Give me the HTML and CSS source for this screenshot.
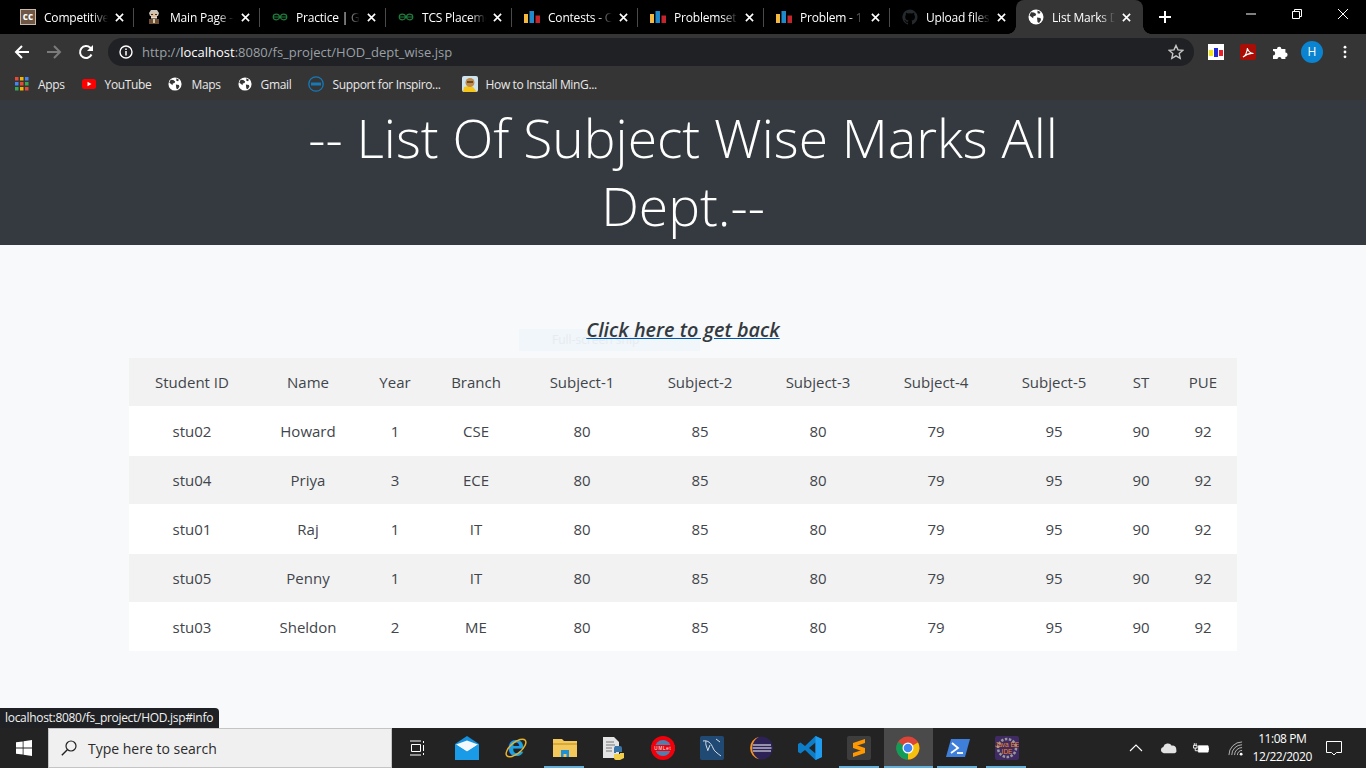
FILE: index.html
```html
<!doctype html>
<html lang="en">

<head>
    <title>List Marks Dept</title>
    <link rel="stylesheet" href="styles.css">
</head>

<body>
    <!-- shared icons -->
    <svg class="defs" aria-hidden="true">
        <symbol id="globe" viewBox="0 0 16 16">
            <circle cx="8" cy="8" r="7.5" fill="#fff" />
            <path d="M3 3.2l3 .3 2.200 1.500-.7 1.800-2 .5-.4 2-1.600-1.300L1.500 6.500zM9 8.500l3.500.5.500 2-2 3-1.500-1zM9.500 1.500l3 1.500-1 1.800-2-.6z" fill="#353535" />
        </symbol>
        <symbol id="bars" viewBox="0 0 16 16">
            <rect x="0" y="5" width="4" height="9" fill="#f4b83f" />
            <rect x="5.500" y="2" width="4.500" height="12" fill="#1f8acb" />
            <rect x="11.500" y="6.500" width="4.500" height="7.500" fill="#c4242b" />
        </symbol>
        <symbol id="gfg" viewBox="0 1 20 10">
            <path d="M1 6h18M9.500 6C9 3.500 7.500 2.500 5.500 2.500 3 2.500 1.500 4 1.500 6s1.500 3.500 4 3.500c2 0 3.500-1 4-3.500M10.500 6c.5-2.500 2-3.500 4-3.500 2.500 0 4 1.500 4 3.500s-1.500 3.500-4 3.500c-2 0-3.500-1-4-3.500" fill="none" stroke="#1f7a3a" stroke-width="1.500" />
        </symbol>
        <symbol id="close" viewBox="0 0 10 10">
            <path d="M1 1l8 8M9 1L1 9" stroke="#fff" stroke-width="1.800" fill="none" />
        </symbol>
    </svg>

    <div class="tabstrip">
        <div class="tab">
            <span class="favicon cc">cc</span>
            <span class="tab-title">Competitive Programming</span>
            <svg class="tab-close"><use href="#close" /></svg>
        </div>
        <div class="tab">
            <svg class="favicon" viewBox="0 0 16 16">
                <path d="M3 4l2-3h6l2 3-1 3H4z" fill="#c9c4bc" />
                <rect x="5" y="4" width="6" height="5" fill="#e3b98f" />
                <rect x="5" y="5" width="2" height="1" fill="#333" />
                <rect x="9" y="5" width="2" height="1" fill="#333" />
                <rect x="5" y="8" width="6" height="1.500" fill="#ddd" />
                <path d="M3 10h10v5H3z" fill="#6d4f33" />
                <rect x="7" y="10" width="2" height="4" fill="#d9c8a8" />
            </svg>
            <span class="tab-title">Main Page - Wikipedia</span>
            <svg class="tab-close"><use href="#close" /></svg>
        </div>
        <div class="tab">
            <svg class="favicon gfg-icon"><use href="#gfg" /></svg>
            <span class="tab-title">Practice | GeeksforGeeks</span>
            <svg class="tab-close"><use href="#close" /></svg>
        </div>
        <div class="tab">
            <svg class="favicon gfg-icon"><use href="#gfg" /></svg>
            <span class="tab-title">TCS Placement Paper</span>
            <svg class="tab-close"><use href="#close" /></svg>
        </div>
        <div class="tab">
            <svg class="favicon"><use href="#bars" /></svg>
            <span class="tab-title">Contests - Codeforces</span>
            <svg class="tab-close"><use href="#close" /></svg>
        </div>
        <div class="tab">
            <svg class="favicon"><use href="#bars" /></svg>
            <span class="tab-title">Problemset - Codeforces</span>
            <svg class="tab-close"><use href="#close" /></svg>
        </div>
        <div class="tab">
            <svg class="favicon"><use href="#bars" /></svg>
            <span class="tab-title">Problem - 1 - Codeforces</span>
            <svg class="tab-close"><use href="#close" /></svg>
        </div>
        <div class="tab tab-no-sep">
            <svg class="favicon" viewBox="0 0 16 16">
                <path d="M8 .5a7.700 7.700 0 0 0-2.400 15c.4.100.5-.2.500-.4v-1.300c-2.100.4-2.600-1-2.600-1-.4-.9-.9-1.200-.9-1.200-.7-.5.100-.5.100-.5.800.100 1.200.8 1.200.8.700 1.200 1.800.9 2.300.7 0-.5.300-.9.500-1.100-1.700-.2-3.500-.9-3.500-3.800 0-.8.300-1.500.8-2-.1-.2-.3-1 .1-2 0 0 .6-.2 2.100.8a7 7 0 0 1 3.800 0c1.500-1 2.100-.8 2.100-.8.400 1 .2 1.800.1 2 .5.500.8 1.200.8 2 0 2.900-1.800 3.600-3.500 3.800.3.200.5.700.5 1.400v2.100c0 .2.100.5.500.4A7.700 7.700 0 0 0 8 .5z" fill="#24292e" />
            </svg>
            <span class="tab-title">Upload files to GitHub</span>
            <svg class="tab-close"><use href="#close" /></svg>
        </div>
        <div class="tab tab-active">
            <svg class="favicon"><use href="#globe" /></svg>
            <span class="tab-title">List Marks Dept Wise</span>
            <svg class="tab-close"><use href="#close" /></svg>
        </div>
        <svg class="new-tab" viewBox="0 0 12 12"><path d="M6 0v12M0 6h12" stroke="#fff" stroke-width="2" /></svg>
        <div class="window-controls">
            <svg viewBox="0 0 10 10"><path d="M0 5h10" stroke="#fff" /></svg>
            <svg viewBox="0 0 10 10"><path d="M.5 2.500h7v7h-7zM2.500 2.500v-2h7v7h-2" stroke="#fff" fill="none" /></svg>
            <svg viewBox="0 0 10 10"><path d="M0 0l10 10M10 0L0 10" stroke="#fff" fill="none" /></svg>
        </div>
    </div>

    <div class="toolbar">
        <svg class="nav-icon" viewBox="0 0 16 16"><path d="M15 8H2M8 2L2 8l6 6" stroke="#fff" stroke-width="2" fill="none" /></svg>
        <svg class="nav-icon" viewBox="0 0 16 16"><path d="M1 8h13M8 2l6 6-6 6" stroke="#7b7b7b" stroke-width="2" fill="none" /></svg>
        <svg class="nav-icon" viewBox="0 0 16 16"><path d="M13.500 10.500A6 6 0 1 1 12.300 3.800L14 5.500" stroke="#fff" stroke-width="2" fill="none" /><path d="M15 1v6H9z" fill="#fff" /></svg>
        <div class="omnibox">
            <svg class="info-icon" viewBox="0 0 14 14">
                <circle cx="7" cy="7" r="6" stroke="#fff" stroke-width="1.400" fill="none" />
                <path d="M7 6v4.500M7 3.500v1.500" stroke="#fff" stroke-width="1.500" />
            </svg>
            <span class="url">http://<b>localhost</b>:8080/fs_project/HOD_dept_wise.jsp</span>
            <svg class="star-icon" viewBox="0 0 16 16"><path d="M8 1.500l2 4.400 4.800.5-3.600 3.200 1 4.700L8 11.900l-4.200 2.400 1-4.700L1.200 6.400 6 5.900z" stroke="#c8c8c8" stroke-width="1.400" fill="none" /></svg>
        </div>
        <div class="extensions">
            <svg class="ext-icon" viewBox="0 0 16 16">
                <rect width="16" height="16" fill="#fff" />
                <rect x="1" y="6" width="4" height="6" fill="#f5e60a" />
                <rect x="6" y="4" width="4" height="9" fill="#1f2bd6" />
                <rect x="11" y="6" width="4" height="6" fill="#e8202a" />
            </svg>
            <svg class="ext-icon" viewBox="0 0 16 16">
                <rect width="16" height="16" rx="2" fill="#a80e06" />
                <path d="M3 13c2-1 4-5 4.500-9 .5 3 2 5 6 5.500-3-.5-7 .5-10.500 3.500z" stroke="#fff" stroke-width="1.200" fill="none" />
            </svg>
            <svg class="ext-icon" viewBox="0 0 16 16"><path d="M1 5h4a2.200 2.200 0 0 1 4.400 0h4v3.500a2.200 2.200 0 0 1 0 4.400V15H9.500a2 2 0 0 0-4 0H1v-3.500a2.200 2.200 0 0 0 0-4.400z" fill="#fff" /></svg>
            <span class="avatar">H</span>
            <svg class="menu-icon" viewBox="0 0 4 16"><circle cx="2" cy="2.500" r="1.600" fill="#fff" /><circle cx="2" cy="8" r="1.600" fill="#fff" /><circle cx="2" cy="13.500" r="1.600" fill="#fff" /></svg>
        </div>
    </div>

    <div class="bookmarks">
        <div class="bookmark">
            <svg class="bm-icon" viewBox="0 0 14 14">
                <rect x="0" y="0" width="3.500" height="3.500" fill="#e5493a" /><rect x="5" y="0" width="3.500" height="3.500" fill="#f4b400" /><rect x="10" y="0" width="3.500" height="3.500" fill="#4285f4" />
                <rect x="0" y="5" width="3.500" height="3.500" fill="#4285f4" /><rect x="5" y="5" width="3.500" height="3.500" fill="#e5493a" /><rect x="10" y="5" width="3.500" height="3.500" fill="#34a853" />
                <rect x="0" y="10" width="3.500" height="3.500" fill="#34a853" /><rect x="5" y="10" width="3.500" height="3.500" fill="#f4b400" /><rect x="10" y="10" width="3.500" height="3.500" fill="#e5493a" />
            </svg>
            <span>Apps</span>
        </div>
        <div class="bookmark">
            <svg class="bm-icon" viewBox="0 0 14 14"><rect y="2" width="14" height="10" rx="2.500" fill="#f00" /><path d="M5.500 4.800L9.500 7l-4 2.200z" fill="#fff" /></svg>
            <span>YouTube</span>
        </div>
        <div class="bookmark">
            <svg class="bm-icon"><use href="#globe" /></svg>
            <span>Maps</span>
        </div>
        <div class="bookmark">
            <svg class="bm-icon"><use href="#globe" /></svg>
            <span>Gmail</span>
        </div>
        <div class="bookmark">
            <svg class="bm-icon wide-icon" viewBox="0 0 16 16">
                <circle cx="8" cy="8" r="7.200" stroke="#1679b8" stroke-width="1.300" fill="none" />
                <rect x="3" y="6.500" width="10" height="3" fill="#1679b8" />
            </svg>
            <span>Support for Inspiro...</span>
        </div>
        <div class="bookmark bm-last">
            <svg class="bm-icon wide-icon" viewBox="0 0 16 16">
                <rect width="16" height="16" rx="2" fill="#cfe3ee" />
                <path d="M1 16l1-5 5-1 4 1 4 5z" fill="#f5c518" />
                <circle cx="8" cy="6.500" r="4.500" fill="#c08a4a" />
                <rect x="5" y="5" width="6" height="2" fill="#6b4a25" />
            </svg>
            <span>How to Install MinG...</span>
        </div>
    </div>

    <main class="page">
        <header class="banner">
            <h1>-- List Of Subject Wise Marks All<br>Dept.--</h1>
        </header>

        <div class="back-row">
            <a class="back-link" href="#info">Click here to get back</a>
        </div>

        <table class="marks">
            <colgroup>
                <col class="col-id"><col class="col-name"><col class="col-year"><col class="col-branch">
                <col class="col-subject"><col class="col-subject"><col class="col-subject"><col class="col-subject"><col class="col-subject">
                <col class="col-st"><col class="col-pue">
            </colgroup>
            <thead>
                <tr>
                    <th>Student ID</th><th>Name</th><th>Year</th><th>Branch</th><th>Subject-1</th><th>Subject-2</th><th>Subject-3</th><th>Subject-4</th><th>Subject-5</th><th>ST</th><th>PUE</th>
                </tr>
            </thead>
            <tbody>
                <tr>
                    <td>stu02</td><td>Howard</td><td>1</td><td>CSE</td><td>80</td><td>85</td><td>80</td><td>79</td><td>95</td><td>90</td><td>92</td>
                </tr>
                <tr>
                    <td>stu04</td><td>Priya</td><td>3</td><td>ECE</td><td>80</td><td>85</td><td>80</td><td>79</td><td>95</td><td>90</td><td>92</td>
                </tr>
                <tr>
                    <td>stu01</td><td>Raj</td><td>1</td><td>IT</td><td>80</td><td>85</td><td>80</td><td>79</td><td>95</td><td>90</td><td>92</td>
                </tr>
                <tr>
                    <td>stu05</td><td>Penny</td><td>1</td><td>IT</td><td>80</td><td>85</td><td>80</td><td>79</td><td>95</td><td>90</td><td>92</td>
                </tr>
                <tr>
                    <td>stu03</td><td>Sheldon</td><td>2</td><td>ME</td><td>80</td><td>85</td><td>80</td><td>79</td><td>95</td><td>90</td><td>92</td>
                </tr>
            </tbody>
        </table>

        <div class="snip-ghost">Full-screen snip</div>
        <div class="status-bubble">localhost:8080/fs_project/HOD.jsp#info</div>
    </main>

    <footer class="taskbar">
        <div class="start">
            <svg viewBox="0 0 16 16" class="win-logo"><path d="M0 2.300l6.700-.9v6.200H0zM7.500 1.300L16 0v7.600H7.500zM0 8.400h6.700v6.200L0 13.700zM7.500 8.400H16V16l-8.500-1.200z" fill="#fff" /></svg>
        </div>
        <div class="search">
            <svg viewBox="0 0 16 16" class="search-icon"><circle cx="10" cy="6" r="5" stroke="#222" stroke-width="1.200" fill="none" /><path d="M6.300 9.700L.8 15.200" stroke="#222" stroke-width="1.400" /></svg>
            <span>Type here to search</span>
        </div>
        <div class="task-items">
            <div class="task-item">
                <svg viewBox="0 0 16 16" class="task-view"><path d="M1 1h11M1 15h11M2.500 4.500h9v7h-9zM14.500 1v2M14.500 5v6M14.500 13v2" stroke="#fff" fill="none" /></svg>
            </div>
            <div class="task-item">
                <svg viewBox="0 0 24 24" class="app-icon"><path d="M0 8l12-8 12 8v16H0z" fill="#1490df" /><path d="M1 8.500l11-4 11 4-11 7z" fill="#f2f8fc" /><path d="M0 8v16h24V8l-12 8z" fill="#1a9be8" /></svg>
            </div>
            <div class="task-item">
                <svg viewBox="0 0 24 24" class="app-icon">
                    <text x="12" y="20" class="ie-letter">e</text>
                    <ellipse cx="12" cy="12" rx="12" ry="5.500" transform="rotate(-40 12 12)" stroke="#e6b32e" stroke-width="1.500" fill="none" />
                </svg>
            </div>
            <div class="task-item task-open">
                <svg viewBox="0 0 24 24" class="app-icon"><path d="M0 3h9l2 2h13v16H0z" fill="#f3c95c" /><rect y="7" width="24" height="2" fill="#d9a93a" /><path d="M8 21v-7h8v7h-2.500v-3h-3v3z" fill="#1f8fd6" /></svg>
            </div>
            <div class="task-item">
                <svg viewBox="0 0 24 24" class="app-icon">
                    <path d="M1 1h11l5 5v16H1z" fill="#e4e4e4" /><path d="M4 6h8M4 9h9M4 12h6M4 15h6" stroke="#777" />
                    <path d="M13 10h5a2 2 0 0 1 2 2v4h-6v1h-2v-5z" fill="#3a75a8" /><path d="M18 24h-4a2 2 0 0 1-2-2v-4h6v-1h4v5z" fill="#f2cf4a" />
                </svg>
            </div>
            <div class="task-item">
                <svg viewBox="0 0 24 24" class="app-icon">
                    <circle cx="12" cy="12" r="12" fill="#f0000a" /><circle cx="12" cy="12" r="8" fill="#4f7fae" />
                    <rect y="9" width="24" height="6" fill="#f0000a" />
                    <text x="12" y="14" class="uml-letters">UMLet</text>
                </svg>
            </div>
            <div class="task-item">
                <svg viewBox="0 0 24 24" class="app-icon">
                    <rect width="24" height="24" rx="2" fill="#204a73" />
                    <path d="M3 5c5-1 8 2 10 7 1 3 4 5 8 8M6 5c-1 4 1 6 2 10M10 9l-2 5M16 3l4 3" stroke="#d5dee7" fill="none" />
                </svg>
            </div>
            <div class="task-item">
                <svg viewBox="0 0 24 24" class="app-icon">
                    <circle cx="12.500" cy="12" r="11.500" fill="#2c2255" /><path d="M10 .8a11.500 11.500 0 0 0 0 22.400A14 14 0 0 1 3 12 14 14 0 0 1 10 .8z" fill="#f7941e" />
                    <path d="M4 9h18M3.500 12h19M4 15h18" stroke="#fff" />
                </svg>
            </div>
            <div class="task-item">
                <svg viewBox="0 0 24 24" class="app-icon"><path d="M17.500 0L24 3v18l-6.500 3L7 14l-4.500 3.500L0 16v-8l2.500-1.500L7 10zM17.500 6.500L11 12l6.500 5.500z" fill="#0e7dc7" /><path d="M17.500 0L24 3v18l-6.500 3z" fill="#1f9cf0" /></svg>
            </div>
            <div class="task-item task-open">
                <svg viewBox="0 0 24 24" class="app-icon"><rect width="24" height="24" rx="2" fill="#3d3d3d" /><path d="M18 3v4L6 11V7zM6 8l12 4v4L6 12zM18 13v4L6 21v-4z" fill="#ff9800" /></svg>
            </div>
            <div class="task-item task-open task-active">
                <svg viewBox="0 0 24 24" class="app-icon">
                    <circle cx="12" cy="12" r="11.500" fill="#db4437" />
                    <path d="M12 12L22 6.500A11.500 11.500 0 0 1 12 23.500z" fill="#f4c20d" />
                    <path d="M12 12v11.500A11.500 11.500 0 0 1 2 6z" fill="#0f9d58" />
                    <circle cx="12" cy="12" r="5.500" fill="#fff" /><circle cx="12" cy="12" r="4.300" fill="#4285f4" />
                </svg>
            </div>
            <div class="task-item task-open">
                <svg viewBox="0 0 24 24" class="app-icon"><path d="M5 3h19l-5 18H0z" fill="#3f7fdc" /><path d="M6 7l6 5-7 5" stroke="#fff" stroke-width="1.800" fill="none" /><path d="M11 17h6" stroke="#fff" stroke-width="1.800" /></svg>
            </div>
            <div class="task-item task-open">
                <svg viewBox="0 0 24 24" class="app-icon">
                    <rect width="24" height="24" rx="2" fill="#3f2a63" />
                    <circle cx="12" cy="12" r="9" stroke="#9a9a9a" stroke-width="2.500" stroke-dasharray="2.500 1.500" fill="none" />
                    <text x="12" y="11" class="java-letters">Java EE</text>
                    <text x="12" y="18" class="java-letters">IDE</text>
                </svg>
            </div>
        </div>
        <div class="tray">
            <svg viewBox="0 0 14 8" class="tray-chevron"><path d="M1 7l6-6 6 6" stroke="#fff" stroke-width="1.100" fill="none" /></svg>
            <svg viewBox="0 0 18 12" class="tray-cloud"><path d="M4 11.500a3.300 3.300 0 0 1-.5-6.500 5 5 0 0 1 9-1.500 3.900 3.900 0 0 1 4.700 4.500c.8 2-.5 3.500-2 3.500z" fill="#e3e3e3" /></svg>
            <svg viewBox="0 0 18 12" class="tray-battery"><path d="M6 3h11v7H6z" stroke="#fff" fill="#fff" /><path d="M.5 2.500h4v3h-4zM1.500 0v2.500M3.500 0v2.500M2.500 5.500v3h3" stroke="#fff" fill="none" /><rect x="17" y="5" width="1" height="3" fill="#fff" /></svg>
            <svg viewBox="0 0 16 16" class="tray-wifi"><path d="M1 15A14 14 0 0 1 15 1M4 15A11 11 0 0 1 15 4M7 15a8 8 0 0 1 8-8M10 15a5 5 0 0 1 5-5" stroke="#bbb" fill="none" /><circle cx="14" cy="14" r="1.500" fill="#fff" /></svg>
            <div class="clock">
                <span>11:08 PM</span>
                <span>12/22/2020</span>
            </div>
            <svg viewBox="0 0 16 16" class="tray-notify"><path d="M.5 1.500h15v11h-5L8 15l-2.500-2.500h-5z" stroke="#fff" fill="none" /></svg>
        </div>
    </footer>
</body>

</html>
```

FILE: styles.css
```css
* {
    box-sizing: border-box;
}

body {
    margin: 0;
    width: 1366px;
    height: 768px;
    overflow: hidden;
    display: flex;
    flex-direction: column;
    font-family: "Open Sans", "Noto Sans", sans-serif;
    background-color: #f8f9fa;
}

.defs {
    display: none;
}

/* browser tabs */
.tabstrip {
    height: 34px;
    display: flex;
    align-items: center;
    padding-left: 8px;
    background-color: #000;
    color: #fff;
}

.tab {
    position: relative;
    width: 126px;
    height: 34px;
    display: flex;
    align-items: center;
    padding: 0 9px 0 12px;
}

.tab::after {
    content: "";
    position: absolute;
    right: 0;
    top: 8px;
    width: 1px;
    height: 19px;
    background-color: #4a4a4a;
}

.tab-no-sep::after {
    display: none;
}

.tab-active {
    width: 127px;
    padding-right: 11px;
    background-color: #353535;
    border-radius: 8px 8px 0 0;
}

/* the curved feet of the active tab */
.tab-active::before,
.tab-active::after {
    content: "";
    position: absolute;
    top: auto;
    bottom: 0;
    width: 8px;
    height: 8px;
}

.tab-active::before {
    left: -8px;
    background: radial-gradient(circle at 0 0, #000 7.5px, #353535 8px);
}

.tab-active::after {
    right: -8px;
    background: radial-gradient(circle at 100% 0, #000 7.5px, #353535 8px);
}

.favicon {
    width: 16px;
    height: 16px;
    flex: none;
}

.gfg-icon {
    height: 8px;
}

.cc {
    background-color: #6e5747;
    border: 1px solid #cbb9a8;
    color: #fff;
    font-size: 10px;
    font-weight: 700;
    line-height: 13px;
    text-align: center;
}

.tab-title {
    flex: 1;
    min-width: 0;
    margin-left: 8px;
    overflow: hidden;
    white-space: nowrap;
    font-size: 12px;
    letter-spacing: -0.2px;
    -webkit-mask-image: linear-gradient(to right, #000 75%, transparent 100%);
    mask-image: linear-gradient(to right, #000 75%, transparent 100%);
}

.tab-close {
    width: 9px;
    height: 9px;
    margin: 0 1px 0 7px;
    flex: none;
}

.new-tab {
    width: 12px;
    height: 12px;
    margin-left: 16px;
}

.window-controls {
    margin-left: auto;
    display: flex;
    align-self: flex-start;
    padding: 9px 18px 0 0;
    gap: 36px;
}

.window-controls svg {
    width: 10px;
    height: 10px;
}

/* address bar */
.toolbar {
    height: 34px;
    display: flex;
    align-items: center;
    padding: 4px 0 2px 14px;
    background-color: #353535;
}

.nav-icon {
    width: 16px;
    height: 16px;
    margin-right: 16px;
}

.omnibox {
    width: 1086px;
    height: 28px;
    margin-left: -2px;
    display: flex;
    align-items: center;
    padding: 0 10px 0 11px;
    border-radius: 14px;
    background-color: #202124;
}

.info-icon {
    width: 14px;
    height: 14px;
}

.url {
    margin-left: 9px;
    font-size: 13px;
    color: #9aa0a6;
}

.url b {
    font-weight: 400;
    color: #fff;
}

.star-icon {
    width: 16px;
    height: 16px;
    margin-left: auto;
}

.extensions {
    display: flex;
    align-items: center;
    margin-left: 14px;
}

.ext-icon {
    width: 16px;
    height: 16px;
    margin-right: 16px;
}

.avatar {
    width: 22px;
    height: 22px;
    margin-left: -3px;
    border-radius: 50%;
    background-color: #0a84d0;
    color: #fff;
    font-size: 12px;
    line-height: 22px;
    text-align: center;
}

.menu-icon {
    width: 4px;
    height: 14px;
    margin-left: 20px;
}

/* bookmarks bar */
.bookmarks {
    height: 32px;
    display: flex;
    align-items: center;
    padding: 0 0 0 15px;
    gap: 17px;
    background-color: #353535;
    color: #e8e8e8;
    font-size: 12px;
    letter-spacing: -0.35px;
}

.bookmark {
    display: flex;
    align-items: center;
    gap: 9px;
    white-space: nowrap;
}

.bm-last {
    margin-left: 4px;
}

.bm-icon {
    width: 14px;
    height: 14px;
    flex: none;
}

.wide-icon {
    width: 16px;
    height: 16px;
    margin-right: -1px;
}

/* page content */
.page {
    position: relative;
    flex: 1;
    min-height: 0;
    color: #343a40;
}

.banner {
    height: 145px;
    background-color: #343a40;
    color: #fff;
    text-align: center;
}

.banner h1 {
    margin: 0;
    padding-top: 4px;
    font-size: 53.4px;
    font-weight: 300;
    line-height: 68px;
}

.back-row {
    height: 113px;
    padding-top: 71px;
    text-align: center;
}

.back-link {
    position: relative;
    z-index: 1;
    font-size: 19.8px;
    font-style: italic;
    font-weight: 600;
    line-height: 27px;
    color: #343a40;
    text-decoration-color: #0056b3;
}

.marks {
    width: 1108px;
    margin: 0 auto;
    border-collapse: collapse;
    table-layout: fixed;
    font-size: 15px;
    text-align: center;
    color: #3f454b;
}

.col-id { width: 126px; }
.col-name { width: 106px; }
.col-year { width: 68px; }
.col-branch { width: 94px; }
.col-subject { width: 118px; }
.col-st { width: 56px; }
.col-pue { width: 68px; }

.marks th {
    height: 48px;
    padding: 0;
    font-weight: 400;
    background-color: #f2f2f2;
}

.marks td {
    height: 50px;
    padding: 0;
    background-color: #fff;
}

.marks tbody tr:nth-child(even) td {
    height: 48px;
    background-color: #f2f2f2;
}

.marks tbody tr:last-child td {
    height: 49px;
}

.snip-ghost {
    position: absolute;
    left: 519px;
    top: 229px;
    width: 181px;
    height: 22px;
    background-color: #f1f6fa;
    color: #e6ebf0;
    font-size: 12px;
    line-height: 22px;
    padding-left: 33px;
}

.status-bubble {
    position: absolute;
    left: 0;
    bottom: 0;
    height: 20px;
    padding: 0 6px 0 5px;
    border-radius: 0 4px 0 0;
    background-color: #202124;
    color: #f1f1f1;
    font-size: 12px;
    letter-spacing: -0.3px;
    line-height: 20px;
    white-space: nowrap;
}

/* windows taskbar */
.taskbar {
    height: 40px;
    display: flex;
    background-color: #232323;
    color: #fff;
}

.start {
    width: 48px;
    display: flex;
    align-items: center;
    justify-content: center;
}

.win-logo {
    width: 16px;
    height: 16px;
}

.search {
    width: 344px;
    display: flex;
    align-items: center;
    padding-left: 12px;
    border: 1px solid #c4c4c4;
    background-color: #f0f0f0;
    color: #2b2b2b;
    font-size: 14px;
}

.search-icon {
    width: 16px;
    height: 16px;
    margin-right: 11px;
}

.task-items {
    display: flex;
    padding-left: 1px;
}

.task-item {
    position: relative;
    width: 49.1px;
    display: flex;
    align-items: center;
    justify-content: center;
}

.task-open::after {
    content: "";
    position: absolute;
    left: 4px;
    right: 5px;
    bottom: 0;
    height: 2px;
    background-color: #63b0da;
}

.task-active {
    background-color: #4a4a4a;
}

.task-active::after {
    left: 0;
    right: 0;
}

.task-view {
    width: 16px;
    height: 16px;
    margin-right: 2px;
}

.app-icon {
    width: 24px;
    height: 24px;
}

.ie-letter {
    font-family: "Liberation Sans", sans-serif;
    font-size: 30px;
    font-weight: 700;
    text-anchor: middle;
    fill: #1ea0e6;
}

.uml-letters {
    font-family: "Liberation Sans", sans-serif;
    font-size: 4.5px;
    text-anchor: middle;
    letter-spacing: .8px;
    fill: #fff;
}

.java-letters {
    font-family: "Liberation Sans", sans-serif;
    font-size: 6.5px;
    text-anchor: middle;
    fill: #f08a24;
}

.tray {
    flex: 1;
    display: flex;
    align-items: center;
    padding-left: 98px;
}

.tray-chevron {
    width: 14px;
    height: 8px;
}

.tray-cloud {
    width: 17px;
    height: 12px;
    margin-left: 17px;
}

.tray-battery {
    width: 16px;
    height: 11px;
    margin-left: 16px;
}

.tray-wifi {
    width: 15px;
    height: 15px;
    margin-left: 19px;
}

.clock {
    width: 78px;
    display: flex;
    flex-direction: column;
    gap: 2px;
    font-size: 12px;
    letter-spacing: -0.45px;
    line-height: 16px;
    text-align: center;
}

.tray-notify {
    width: 16px;
    height: 16px;
    margin-left: 5px;
}
```
